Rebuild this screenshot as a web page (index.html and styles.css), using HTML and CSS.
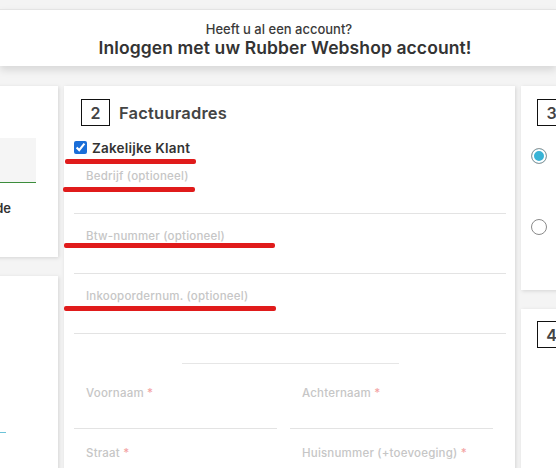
FILE: index.html
```html
<!DOCTYPE html>
<html lang="nl">
<head>
<meta charset="utf-8">
<title>Afrekenen</title>
<link rel="stylesheet" href="styles.css">
</head>
<body>
<header class="banner">
  <p class="banner-sub">Heeft u al een account?</p>
  <p class="banner-title">Inloggen met uw Rubber Webshop account!</p>
</header>

<main class="grid">
  <div class="col">
    <section class="card card-left1">
      <div class="fake-input"></div>
      <p class="left-label">Verzendmethode</p>
    </section>
    <section class="card card-left2">
      <div class="teal-line"></div>
    </section>
  </div>

  <section class="card card-mid">
    <div class="step-head">
      <span class="step-num">2</span>
      <h2 class="step-title">Factuuradres</h2>
    </div>
    <label class="check-row">
      <input type="checkbox" checked>
      <span>Zakelijke Klant</span>
      <i class="mark mark-1"></i>
    </label>
    <div class="field first"><span class="ph">Bedrijf (optioneel)</span><i class="mark mark-2"></i></div>
    <div class="field"><span class="ph">Btw-nummer (optioneel)</span><i class="mark mark-3"></i></div>
    <div class="field"><span class="ph">Inkoopordernum. (optioneel)</span><i class="mark mark-4"></i></div>
    <div class="sep"></div>
    <div class="pair">
      <div class="field half"><span class="ph">Voornaam <b>*</b></span></div>
      <div class="field half"><span class="ph">Achternaam <b>*</b></span></div>
      <div class="field half"><span class="ph">Straat <b>*</b></span></div>
      <div class="field half"><span class="ph">Huisnummer (+toevoeging) <b>*</b></span></div>
    </div>
  </section>

  <div class="col">
    <section class="card card-right3">
      <div class="step-head"><span class="step-num">3</span></div>
      <div class="radio on"></div>
      <div class="radio"></div>
    </section>
    <section class="card card-right4">
      <div class="step-head"><span class="step-num">4</span></div>
    </section>
  </div>
</main>
</body>
</html>
```

FILE: styles.css
```css
* { box-sizing: border-box; }
html, body { margin: 0; padding: 0; }
body {
  width: 556px;
  height: 468px;
  overflow: hidden;
  background: #f4f4f4;
  font-family: "Inter", "Open Sans", sans-serif;
  color: #333;
}
.banner {
  margin-top: 9px;
  height: 57px;
  background: #fff;
  border-top: 1px solid #e4e4e4;
  box-shadow: 0 4px 8px rgba(0,0,0,0.12);
  text-align: center;
  padding-top: 11px;
}
.banner p { margin: 0; }
.banner-sub {
  font-size: 13px;
  font-weight: 500;
  line-height: 16px;
  color: #3a3a3a;
  padding-left: 2px;
}
.banner-title {
  font-size: 17.5px;
  font-weight: 600;
  line-height: 22px;
  color: #333;
  padding-left: 14px;
  letter-spacing: 0.1px;
}
.grid {
  display: grid;
  grid-template-columns: 258px 451px 260px;
  column-gap: 6px;
  margin-left: -200px;
  margin-top: 20px;
  align-items: start;
}
.col { display: flex; flex-direction: column; gap: 19px; }
.card {
  background: #fff;
  box-shadow: 1px 1px 4px rgba(0,0,0,0.13);
}
.card-left1 { height: 171px; padding: 52px 22px 0 0; }
.fake-input {
  height: 45px;
  background: #f5f5f5;
  border-bottom: 1px solid #3c8d3c;
}
.left-label {
  margin: 17px 0 0;
  text-align: right;
  padding-right: 25px;
  font-size: 13px;
  font-weight: 600;
  color: #333;
}
.card-left2 { height: 300px; padding-top: 156px; }
.teal-line { margin-left: 200px; width: 6px; height: 1px; background: #6cc3d8; }

.card-mid {
  height: 420px;
  padding: 13px 9px 0 10px;
  position: relative;
}
.step-head { display: flex; align-items: center; gap: 9px; padding-left: 7px; }
.step-num {
  width: 29px;
  height: 27px;
  border: 1px solid #111;
  display: flex;
  align-items: center;
  justify-content: center;
  font-size: 16px;
  font-weight: 600;
  color: #444;
}
.step-title {
  margin: 0;
  font-size: 16.5px;
  font-weight: 600;
  color: #444;
  letter-spacing: 0.2px;
}
.check-row {
  display: flex;
  align-items: center;
  gap: 5px;
  margin-top: 14px;
  height: 15px;
  font-size: 13.5px;
  font-weight: 600;
  color: #333;
  letter-spacing: 0.2px;
  position: relative;
}
.check-row input {
  margin: 0;
  width: 13px;
  height: 13px;
  accent-color: #1a6ed8;
}
.field {
  height: 60px;
  border-bottom: 1px solid #e3e3e3;
  padding: 10px 0 0 12px;
  position: relative;
}
.field.first { height: 59px; padding-top: 9px; }
.ph {
  font-size: 11.5px;
  font-weight: 500;
  color: #c6c6c6;
  letter-spacing: 0.2px;
}
.ph b { color: #f3a3a3; font-weight: 500; }
.sep { width: 217px; height: 1px; background: #e6e6e6; margin: 29px auto 0; }
.pair {
  display: grid;
  grid-template-columns: 203px 203px;
  column-gap: 13px;
}
.field.half { height: 65px; padding-top: 17px; }
.field.half:nth-child(n+3) { height: 60px; padding-top: 12px; }

.mark {
  position: absolute;
  height: 4.5px;
  border-radius: 2px;
  background: #e01b1b;
}
.mark-1 { left: -9px; top: 19px; width: 131px; }
.mark-2 { left: -11px; top: 32px; width: 132px; }
.mark-3 { left: -10px; top: 29px; width: 211px; }
.mark-4 { left: -10px; top: 32px; width: 212px; }

.card-right3 { height: 204px; padding: 13px 0 0 0; }
.card-right3 .step-head { padding-left: 16px; }
.radio {
  width: 16px;
  height: 16px;
  border-radius: 50%;
  border: 1px solid #8a8a8a;
  margin-left: 10px;
}
.radio.on {
  margin-top: 22px;
  background: #38b3d6;
  box-shadow: inset 0 0 0 2px #fff;
  border-color: #9a9a9a;
}
.radio + .radio { margin-top: 55px; }
.card-right4 { height: 200px; padding: 12px 0 0 0; }
.card-right4 .step-head { padding-left: 16px; }
```
